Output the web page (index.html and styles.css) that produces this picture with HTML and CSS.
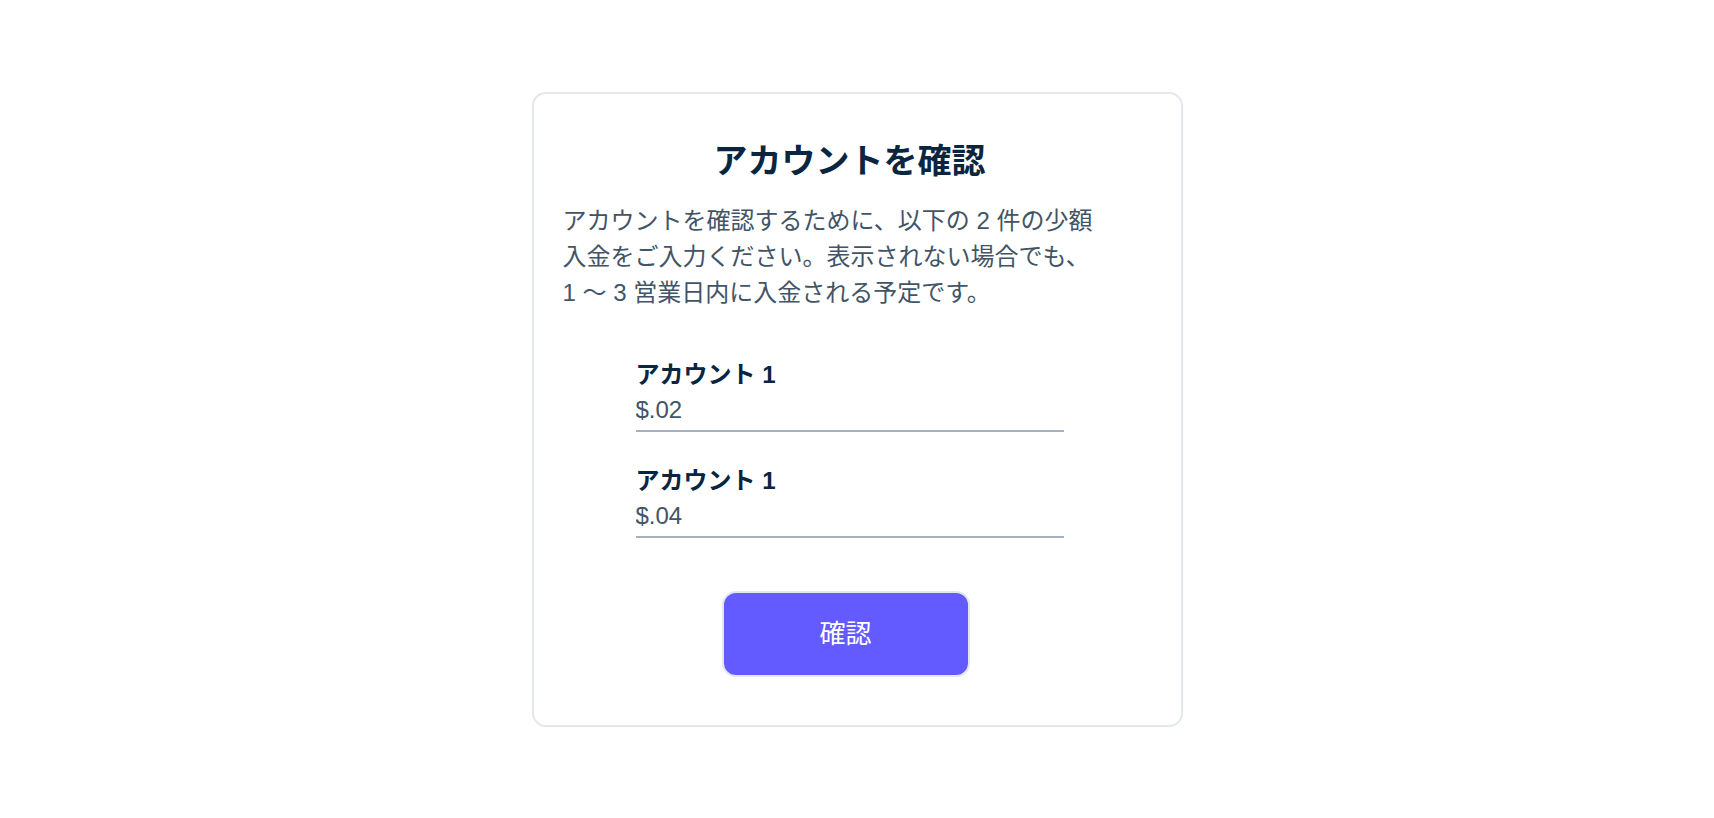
FILE: index.html
```html
<!DOCTYPE html>
<html lang="ja">
<head>
  <meta charset="UTF-8" />
  <meta name="viewport" content="width=device-width, initial-scale=1" />
  <title>アカウントを確認</title>
  <link rel="stylesheet" href="styles.css">
</head>
<body>

  <main class="verify-card">
    <h1>アカウントを確認</h1>
    <p class="intro">アカウントを確認するために、以下の 2 件の少額入金をご入力ください。表示されない場合でも、1 ～ 3 営業日内に入金される予定です。</p>

    <form class="deposit-form">
      <label class="field">
        <span class="field-label">アカウント 1</span>
        <input type="text" value="$.02" />
      </label>
      <label class="field">
        <span class="field-label">アカウント 1</span>
        <input type="text" value="$.04" />
      </label>
      <button type="submit" class="confirm-btn">確認</button>
    </form>
  </main>

</body>
</html>
```

FILE: styles.css
```css
:root {
  --bg-color: #ffffff;
  --border-color: #e3e8ee;
  --title-color: #0a2540;
  --text-color: #425466;
  --line-color: #a3b1c0;
  --accent-color: #635bff;
  --font-stack: "Liberation Sans", "Noto Sans CJK JP", sans-serif;
}

* {
  margin: 0;
  padding: 0;
  box-sizing: border-box;
}

body {
  font-family: var(--font-stack);
  background-color: var(--bg-color);
  color: var(--text-color);
}

.verify-card {
  width: 651px;
  margin: 92px auto 0;
  padding: 47px 44px 48px 29px;
  border: 2px solid var(--border-color);
  border-radius: 14px;
}

.verify-card h1 {
  font-size: 34px;
  line-height: 40px;
  font-weight: 700;
  color: var(--title-color);
  text-align: center;
}

.intro {
  max-width: 540px;
  margin-top: 22px;
  font-size: 24px;
  line-height: 36px;
}

.deposit-form {
  display: flex;
  flex-direction: column;
  align-items: center;
  margin-top: 49px;
}

.field {
  display: block;
  width: 428px;
}

.field + .field {
  margin-top: 34px;
}

.field-label {
  display: block;
  font-size: 24px;
  line-height: 30px;
  font-weight: 700;
  color: var(--title-color);
}

.field input {
  display: block;
  width: 100%;
  height: 38px;
  margin-top: 4px;
  padding: 0 0 4px;
  border: none;
  border-bottom: 2px solid var(--line-color);
  background: transparent;
  font: inherit;
  font-size: 24px;
  color: var(--text-color);
  outline: none;
}

.confirm-btn {
  width: 248px;
  height: 86px;
  margin: 53px 8px 0 0;
  padding-bottom: 6px;
  background-color: var(--accent-color);
  color: #fff;
  border: 2px solid var(--border-color);
  border-radius: 14px;
  font-family: var(--font-stack);
  font-size: 26px;
  cursor: pointer;
}
```
